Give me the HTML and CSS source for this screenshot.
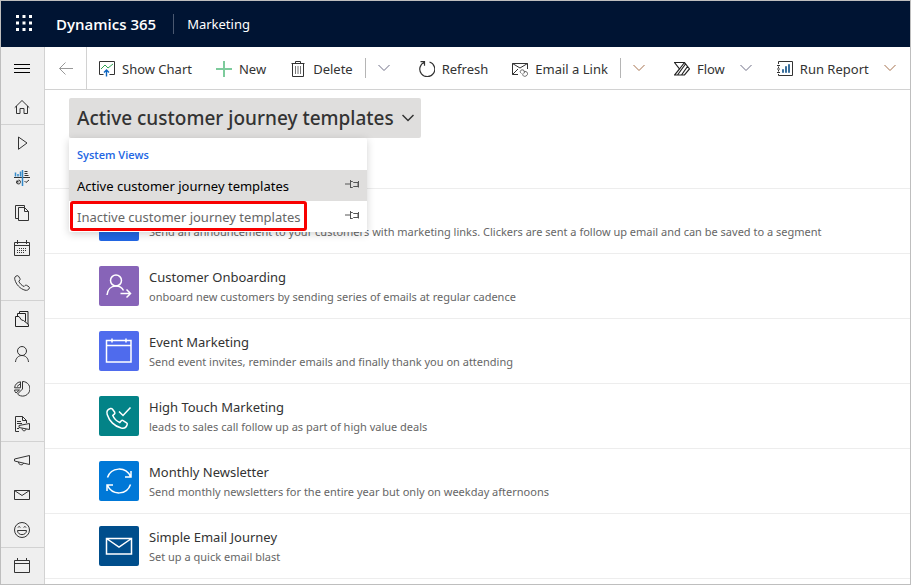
FILE: index.html
```html
<!DOCTYPE html>
<html lang="en">
<head>
<meta charset="utf-8">
<title>Marketing - Dynamics 365</title>
<link rel="stylesheet" href="styles.css">
</head>
<body>
<svg class="defs" aria-hidden="true">
  <symbol id="chevron" viewBox="0 0 12 12"><path d="M.5 3 6 8.500l5.500-5.500"/></symbol>
  <symbol id="pin" viewBox="0 0 14 10"><path d="M0 5h5M5.500 1v8M5.500 2.500h2l1 1h4.500v4h-4.500l-1 1h-2M13.500 2v6.500"/></symbol>
</svg>
<div class="app">
  <header class="topbar">
    <button class="waffle" aria-label="App launcher">
      <svg width="16" height="16" viewBox="0 0 16 16"><path d="M0 0h3v3H0zM6.500 0h3v3h-3zM13 0h3v3h-3zM0 6.500h3v3H0zM6.500 6.500h3v3h-3zM13 6.500h3v3h-3zM0 13h3v3H0zM6.500 13h3v3h-3zM13 13h3v3h-3z"/></svg>
    </button>
    <a class="brand" href="#">Dynamics 365</a>
    <a class="area" href="#">Marketing</a>
  </header>
  <div class="body">
    <nav class="rail" aria-label="Site map">
      <button class="menu" aria-label="Expand"><svg class="icon" viewBox="0 0 16 16"><path d="M0 4.500h16M0 8.500h16M0 12.500h16"/></svg></button>
      <div class="group">
        <a href="#" aria-label="Home"><svg class="icon" viewBox="0 0 16 16"><path d="M.7 8.700 8 1.500l7.300 7.200M2.500 7v7.500h3.500v-5h4v5h3.500V7"/></svg></a>
      </div>
      <div class="group">
        <a href="#" aria-label="Get started"><svg class="icon" viewBox="0 0 16 16"><path d="M4.500 2 13 8l-8.500 6.300z"/></svg></a>
        <a href="#" aria-label="Dashboards"><svg class="icon" viewBox="0 0 16 16"><path d="M0 7.500h16"/><path stroke="#3289c9" stroke-width="1.500" d="M1.500 6.500v-4M4 6.500V4M6.500 6.500v-5M8.500 0v16"/><path d="M10.500 1.500h3M10.500 3.500h3M10.500 5.500h4M10.500 11l1.500 1.500 3-2.500M2.500 11.500a2 2 0 1 0 2-1.500"/><path stroke-width="2" d="M2.500 11.500h2"/></svg></a>
        <a href="#" aria-label="Pages"><svg class="icon" viewBox="0 0 16 16"><path d="M4.500 13.500h-3V.5h9v2M4.500 2.500h6l4 4v9h-10zM10.500 2.500v4h4"/></svg></a>
        <a href="#" aria-label="Calendar"><svg class="icon" viewBox="0 0 16 16"><path d="M.5 2.500h15v13H.5zM.5 5.500h15M3.500 0v4M12.500 0v4"/><path stroke-dasharray="1 1" d="M5 8.500h8M3 10.500h10M3 12.500h8"/></svg></a>
        <a href="#" aria-label="Phone calls"><svg class="icon" viewBox="0 0 16 16"><path d="M3.200.7C1.200 1 .3 2.600.8 4.500c1.300 5 5.200 9.200 10.200 10.700 2 .5 3.900-.4 4.400-2.200.1-.5 0-.8-.4-1.100l-2.400-1.600c-.5-.3-1-.3-1.400.1l-1.100 1.100C7.800 10.600 5.700 8.500 4.800 6.200L5.900 5c.3-.4.3-.8.100-1.300L4.500 1.200C4.200.8 3.800.6 3.200.7z"/></svg></a>
      </div>
      <div class="group">
        <a href="#" aria-label="Accounts"><svg class="icon" viewBox="0 0 16 16"><path stroke="#222" d="M1.500 5.500v10h13v-2L9.500 9.500l-2-.5-2.500-3.500zM3.500 5V2.500h8v8M5.500 2V.5h8.500v13"/></svg></a>
        <a href="#" aria-label="Contacts"><svg class="icon" viewBox="0 0 16 16"><circle cx="8" cy="5" r="4.500"/><path d="M1.500 16c.3-4 3-6.500 6.500-6.500s6.200 2.500 6.500 6.500"/></svg></a>
        <a href="#" aria-label="Segments"><svg class="icon" viewBox="0 0 16 16"><path d="M8.500.5a7.300 7.300 0 1 1-5 12.500l5-5zM6.500.8v6H.6A7 7 0 0 1 6.500.8zM.5 9h5l-3.500 3A6 6 0 0 1 .5 9zM3 5.500 6 3"/></svg></a>
        <a href="#" aria-label="Marketing lists"><svg class="icon" viewBox="0 0 16 16"><path d="M5 15.500H1.500V.5h7l4 4V7M8.500.5v4h4M3 5.500h4M3 7.500h5M3 12.500h2M5 9.500l10.500-2v6L5 11.500zM8 12.500c0 3 4 3 4 .5"/></svg></a>
      </div>
      <div class="group">
        <a href="#" aria-label="Campaigns"><svg class="icon" viewBox="0 0 16 16"><path d="M.5 7 15.500 3.500v9L.5 9zM4.500 10c0 3.500 5 3.500 5 1"/></svg></a>
        <a href="#" aria-label="Marketing emails"><svg class="icon" viewBox="0 0 16 16"><path d="M.5 3.500h15v9H.5zM.5 3.500 8 8.500l7.500-5"/></svg></a>
        <a href="#" aria-label="Customer voice"><svg class="icon" viewBox="0 0 16 16"><circle cx="8" cy="8" r="7.500"/><path d="M3.500 8.500h9c0 5.500-9 5.500-9 0zM4 5.500c.5-1.200 1.800-1.200 2.300 0M9.700 5.500c.5-1.200 1.800-1.200 2.300 0"/></svg></a>
      </div>
      <div class="group">
        <a href="#" aria-label="Events"><svg class="icon" viewBox="0 0 16 16"><path d="M.5 2.500h15v12H.5zM.5 5.500h15M3.500 0v3M12.500 0v3"/></svg></a>
      </div>
    </nav>
    <div class="content">
      <div class="toolbar" role="toolbar">
        <button class="back" aria-label="Back"><svg class="icon" viewBox="0 0 16 16"><path stroke="#999" d="M15 8.500H1.500M7.500 2.500l-6 6 6 6"/></svg></button>
        <button class="command"><svg class="icon" viewBox="0 0 16 16"><path d="M4.500 13.500h-4V.5h15v13h-5"/><path stroke="#31a354" d="m2 8 4-4 3 3 5-4"/><path stroke="#0b64c0" stroke-width="1.400" d="M7.500 15.500V9M5 11.500 7.500 9l2.500 2.500"/></svg>Show Chart</button>
        <button class="command"><svg class="icon" viewBox="0 0 16 16"><path stroke="#7dcb9c" stroke-width="2" d="M0 8h16M8 0v16"/></svg>New</button>
        <button class="command"><svg class="icon" viewBox="0 0 16 16"><path d="M1.500 2.500h13M5.500 2.500v-2h5v2M2.500 2.500v13h11v-13"/><path stroke="#777" d="M5.500 5v8M8 5v8M10.500 5v8"/></svg>Delete</button>
        <button class="more split" aria-label="More delete options"><svg class="arrow"><use href="#chevron"/></svg></button>
        <button class="command"><svg class="icon" viewBox="0 0 16 16"><path stroke-width="1.200" d="M5.500 1.200A7.500 7.500 0 1 0 10.500 1M1.500.7h4v4"/></svg>Refresh</button>
        <button class="command"><svg class="icon" viewBox="0 0 16 16"><path d="M6 13.500H.5v-11h15V8M.5 2.500 8 7l7.500-4.500M.5 13.500 6 8"/><path stroke="#666" d="M9.500 12.500c-3-2 0-5 2.500-3 1 1 .8 2-.2 3M11.500 11c3-2 6 2 2.500 4-2 1-4-.5-3-2.500"/></svg>Email a Link</button>
        <button class="more split warm" aria-label="More email options"><svg class="arrow"><use href="#chevron"/></svg></button>
        <button class="command"><svg class="icon" viewBox="0 0 16 16"><path stroke="#222" stroke-width="1.200" d="M.5 1.500h10L15.500 8l-5 6H.5l5-6zM5.500 8l5-6.500M3.500 14l8-11M7.500 14l6-8.500"/></svg>Flow</button>
        <button class="more" aria-label="Flow options"><svg class="arrow"><use href="#chevron"/></svg></button>
        <button class="command"><svg class="icon" viewBox="0 0 16 16"><path d="M1.500 3V.5h14v14h-14V13M0 4.500h3M0 8h3M0 11.500h3M1.500 5.500V7M1.500 9v1.500"/><path fill="#8cc4ee" stroke="#3a6f9c" d="M5.500 8.500h1v3h-1zM8.500 5.500h1v6h-1zM11.500 3.500h1v8h-1z"/></svg>Run Report</button>
        <button class="more warm" aria-label="Run report options"><svg class="arrow"><use href="#chevron"/></svg></button>
      </div>
      <main>
        <div class="heading">
          <div class="picker">
            <button class="view" aria-expanded="true">Active customer journey templates<svg class="arrow"><use href="#chevron"/></svg></button>
            <div class="dropdown">
              <h2>System Views</h2>
              <button class="option selected"><span>Active customer journey templates</span><svg class="pin"><use href="#pin"/></svg></button>
              <button class="option marked"><span>Inactive customer journey templates</span><svg class="pin"><use href="#pin"/></svg></button>
            </div>
          </div>
        </div>
        <ul class="list">
          <li><span class="tile blue"></span><div class="text"><p>Send an announcement to your customers with marketing links. Clickers are sent a follow up email and can be saved to a segment</p></div></li>
          <li><span class="tile purple"><svg viewBox="0 0 40 40"><circle cx="17" cy="14.500" r="5.500"/><path d="M8 29c.5-5.500 4-9 9-9 3.500 0 6 1.500 7.500 4.500M21.500 27.500H31M27.500 23.500l4 4-4 4"/></svg></span><div class="text"><h3>Customer Onboarding</h3><p>onboard new customers by sending series of emails at regular cadence</p></div></li>
          <li><span class="tile indigo"><svg viewBox="0 0 40 40"><path d="M7.500 9.500h24.500v21.500H7.500zM7.500 14.500H32M13 7.500v4M27 7.500v4"/></svg></span><div class="text"><h3>Event Marketing</h3><p>Send event invites, reminder emails and finally thank you on attending</p></div></li>
          <li><span class="tile teal"><svg viewBox="0 0 40 40"><path d="M11.500 12.500c-3 .8-4.300 3-3.300 6 2 6.500 7.500 12 14 13.500 3 .6 5.300-.8 6-3.500.2-.7 0-1.200-.6-1.600l-3.500-2.300c-.7-.4-1.300-.3-1.800.2L20.800 26.500c-3-1.300-5.800-4-7-7l1.700-1.600c.5-.5.5-1 .2-1.700L13.300 13c-.5-.6-1-.7-1.800-.5zM20 15.500l4 4 7.500-8"/></svg></span><div class="text"><h3>High Touch Marketing</h3><p>leads to sales call follow up as part of high value deals</p></div></li>
          <li><span class="tile azure"><svg viewBox="0 0 40 40"><path d="M8.500 16.500C12 6 26.500 5 31.500 15.500M32 10v6h-6M31.500 23.500C28 34 13.500 35 8.500 24.500M8 30v-6h6"/></svg></span><div class="text"><h3>Monthly Newsletter</h3><p>Send monthly newsletters for the entire year but only on weekday afternoons</p></div></li>
          <li><span class="tile navy"><svg viewBox="0 0 40 40"><path d="M7.500 12.500h25v15.500h-25zM7.500 12.500 20 21l12.500-8.500"/></svg></span><div class="text"><h3>Simple Email Journey</h3><p>Set up a quick email blast</p></div></li>
        </ul>
      </main>
    </div>
  </div>
</div>
</body>
</html>
```

FILE: styles.css
```css
*, *::after { box-sizing: border-box; }
body {
  margin: 0;
  font-family: "Noto Sans", "Open Sans", sans-serif;
  font-size: 13px;
  color: #333;
  background: #fff;
}
button {
  border: 0;
  padding: 0;
  background: none;
  font: inherit;
  color: inherit;
  white-space: nowrap;
}
a { color: inherit; text-decoration: none; }
h2, h3, p, ul { margin: 0; padding: 0; font-weight: 400; }
svg { display: block; flex: none; fill: none; stroke: currentColor; }
.defs { position: absolute; width: 0; height: 0; }
.icon { width: 16px; height: 16px; }
.arrow { width: 12px; height: 12px; }

.app {
  display: flex;
  flex-direction: column;
  height: 100vh;
  border: 1px solid #bebebe;
  overflow: hidden;
}
.topbar {
  display: flex;
  align-items: center;
  flex: none;
  height: 46px;
  background: #001433;
  color: #fff;
}
.waffle { padding: 0 16px 2px 15px; }
.waffle svg { fill: #fff; stroke: none; }
.brand {
  padding: 0 17px 0 8px;
  font-family: "Open Sans", "Noto Sans", sans-serif;
  font-size: 15px;
  font-weight: 600;
  line-height: 20px;
  border-right: 1px solid #4a5870;
}
.area { padding-left: 13px; }

.body { display: flex; flex: 1; min-height: 0; }
.rail {
  flex: none;
  width: 44px;
  background: #efefef;
  border-right: 1px solid #d2d2d2;
  overflow: hidden;
}
.rail a, .menu {
  display: flex;
  align-items: center;
  justify-content: center;
  width: 100%;
  height: 35px;
  padding-right: 1px;
}
.menu { height: 42px; color: #000; }
.group { border-bottom: 1px solid #d2d2d2; }
.group:last-child { border-bottom: 0; }

.content { flex: 1; min-width: 0; }
.toolbar {
  display: flex;
  align-items: center;
  height: 43px;
  border-bottom: 1px solid #d2d2d2;
}
.back {
  display: flex;
  align-items: center;
  justify-content: center;
  width: 42px;
  height: 42px;
  border-right: 1px solid #d2d2d2;
}
.command {
  display: flex;
  align-items: center;
  gap: 7px;
  padding: 1px 12px 0;
}
.more { padding: 0 13px 0 3px; color: #6f6f86; }
.split { padding: 4px 17px 4px 12px; border-left: 1px solid #b5b5b5; }
.warm { color: #a5714d; }

.heading { height: 99px; padding: 8px 24px; border-bottom: 1px solid #ededed; }
.picker { position: relative; width: max-content; }
.view {
  display: flex;
  align-items: center;
  gap: 8px;
  height: 40px;
  padding: 0 7px 0 8px;
  border-radius: 2px;
  background: #dfdedd;
  font-size: 19px;
  font-weight: 500;
}
.view .arrow { stroke-width: 1.500; }
.dropdown {
  position: absolute;
  top: 100%;
  left: 0;
  width: 298px;
  background: #fff;
  border-radius: 2px;
  box-shadow: 0 2px 8px rgba(0, 0, 0, 0.18);
}
.dropdown h2 {
  padding: 2px 0 0 8px;
  font-family: "Open Sans", "Noto Sans", sans-serif;
  font-size: 11px;
  font-weight: 600;
  line-height: 30px;
  color: #2266e3;
}
.option {
  position: relative;
  display: flex;
  align-items: center;
  justify-content: space-between;
  width: 100%;
  height: 31px;
  padding: 0 8px;
  color: #666;
}
.selected { background: #dfdedd; color: #000; }
.pin { width: 14px; height: 10px; margin-bottom: 4px; color: #555; }
.marked::after {
  content: "";
  position: absolute;
  top: 0;
  left: 1px;
  width: 237px;
  height: 30px;
  border: 3px solid #f80000;
  border-radius: 3px;
}

.list { list-style: none; }
.list li {
  display: flex;
  align-items: center;
  gap: 10px;
  height: 65px;
  padding-left: 54px;
  border-bottom: 1px solid #ededed;
}
.tile { flex: none; width: 40px; height: 40px; border-radius: 2px; color: #fff; }
.tile svg { stroke-width: 1.500; }
.blue { background: #2266e3; }
.purple { background: #8764b8; }
.indigo { background: #4f6bed; }
.teal { background: #038387; }
.azure { background: #0078d7; }
.navy { background: #004e8c; }
.text { align-self: flex-end; padding-bottom: 11px; white-space: nowrap; }
.text h3 { font-size: 13px; line-height: 20px; }
.text p { font-size: 11px; line-height: 20px; color: #666; }
```
